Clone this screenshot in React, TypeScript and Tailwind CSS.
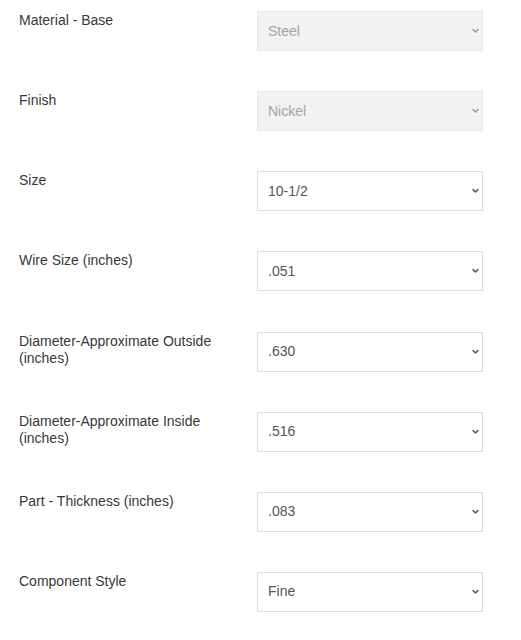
import React from "react";

type Field = {
  label: string;
  value: string;
  disabled?: boolean;
};

const FIELDS: Field[] = [
  { label: "Material - Base", value: "Steel", disabled: true },
  { label: "Finish", value: "Nickel", disabled: true },
  { label: "Size", value: "10-1/2" },
  { label: "Wire Size (inches)", value: ".051" },
  { label: "Diameter-Approximate Outside (inches)", value: ".630" },
  { label: "Diameter-Approximate Inside (inches)", value: ".516" },
  { label: "Part - Thickness (inches)", value: ".083" },
  { label: "Component Style", value: "Fine" },
];

function Chevron({ muted }: { muted?: boolean }) {
  return (
    <svg
      viewBox="0 0 7 5"
      className="pointer-events-none absolute right-[4px] top-1/2 h-[5px] w-[7px] -translate-y-1/2"
      aria-hidden="true"
    >
      <path
        d="M1 1 L3.5 3.5 L6 1"
        fill="none"
        stroke={muted ? "#9a9a9a" : "#555555"}
        strokeWidth="1.5"
        strokeLinecap="round"
        strokeLinejoin="round"
      />
    </svg>
  );
}

function SelectRow({ field }: { field: Field }) {
  return (
    <div className="flex h-[80.15px] items-start">
      <label className="w-[238px] pr-4 pt-[1px] text-[14px] leading-[17px] text-[#383838]">
        {field.label}
      </label>
      <div className="relative h-[40px] w-[226px]">
        <select
          disabled={field.disabled}
          defaultValue={field.value}
          className={`h-full w-full appearance-none border pl-[10px] pr-6 text-[14px] outline-none ${
            field.disabled
              ? "border-[#e8e8e8] bg-[#f2f2f2] text-[#a3a3a3]"
              : "border-[#dcdcdc] bg-white text-[#555555]"
          }`}
          style={{ fontFamily: '"Liberation Sans", Arial, sans-serif' }}
        >
          <option value={field.value}>{field.value}</option>
        </select>
        <Chevron muted={field.disabled} />
      </div>
    </div>
  );
}

export default function App() {
  return (
    <div
      className="min-h-[640px] bg-white pl-[19px] pt-[11px]"
      style={{ fontFamily: '"Liberation Sans", Arial, sans-serif' }}
    >
      {FIELDS.map((field) => (
        <SelectRow key={field.label} field={field} />
      ))}
    </div>
  );
}
